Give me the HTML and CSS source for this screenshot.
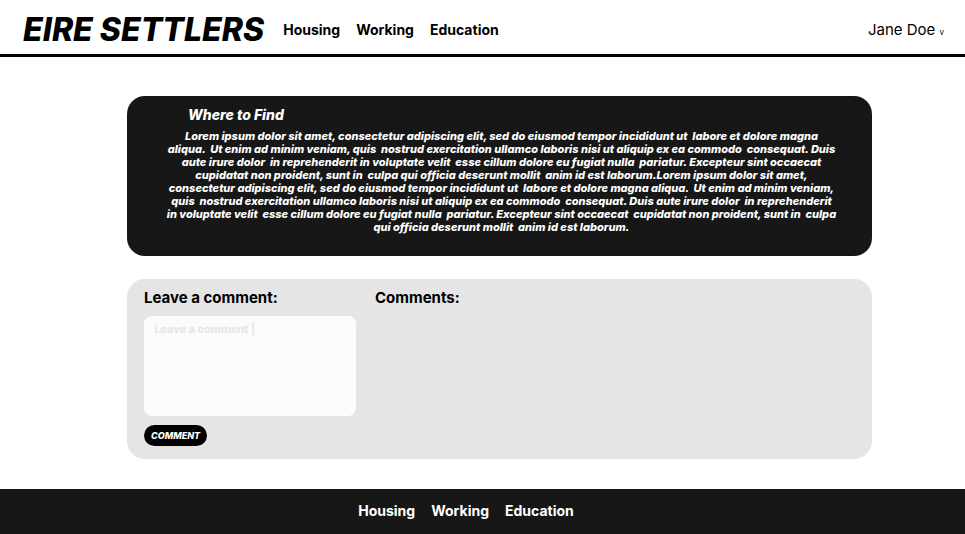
FILE: index.html
```html
<!DOCTYPE html>
<html lang="en">
<head>
<meta charset="utf-8">
<meta name="viewport" content="width=device-width, initial-scale=1">
<title>Eire Settlers</title>
<link rel="stylesheet" href="styles.css">
</head>
<body>
<header class="site-header">
  <h1 class="brand">EIRE SETTLERS</h1>
  <nav class="nav" aria-label="Main">
    <a href="#">Housing</a>
    <a href="#">Working</a>
    <a href="#">Education</a>
  </nav>
  <button class="account" type="button">Jane Doe <span class="caret">v</span></button>
</header>
<main class="content">
  <section class="article">
    <h2 class="article-title">Where to Find</h2>
    <p class="article-text">Lorem ipsum dolor sit amet, consectetur adipiscing elit, sed do eiusmod tempor incididunt ut  labore et dolore magna aliqua.  Ut enim ad minim veniam, quis  nostrud exercitation ullamco laboris nisi ut aliquip ex ea commodo  consequat. Duis aute irure dolor  in reprehenderit in voluptate velit  esse cillum dolore eu fugiat nulla  pariatur. Excepteur sint occaecat cupidatat non proident, sunt in  culpa qui officia deserunt mollit  anim id est laborum.Lorem ipsum dolor sit amet, consectetur adipiscing elit, sed do eiusmod tempor incididunt ut  labore et dolore magna aliqua.  Ut enim ad minim veniam, quis  nostrud exercitation ullamco laboris nisi ut aliquip ex ea commodo  consequat. Duis aute irure dolor  in reprehenderit in voluptate velit  esse cillum dolore eu fugiat nulla  pariatur. Excepteur sint occaecat  cupidatat non proident, sunt in  culpa qui officia deserunt mollit  anim id est laborum.</p>
  </section>
  <section class="discussion">
    <form class="comment-form">
      <label class="heading" for="comment">Leave a comment:</label>
      <textarea class="comment-box" id="comment" placeholder="Leave a comment |"></textarea>
      <button class="submit" type="button">COMMENT</button>
    </form>
    <div class="comments">
      <h2 class="heading">Comments:</h2>
    </div>
  </section>
</main>
<footer class="site-footer">
  <nav class="nav" aria-label="Footer">
    <a href="#">Housing</a>
    <a href="#">Working</a>
    <a href="#">Education</a>
  </nav>
</footer>
</body>
</html>
```
FILE: styles.css
```css
* {
  box-sizing: border-box;
}

body {
  display: flex;
  flex-direction: column;
  min-height: 100vh;
  margin: 0;
  background: #fff;
  color: #000;
  font-family: Inter, "Liberation Sans", sans-serif;
}

h1,
h2,
p {
  margin: 0;
}

button,
textarea {
  border: 0;
  font-family: inherit;
}

.site-header {
  display: flex;
  align-items: center;
  gap: 19px;
  padding: 10px 21px 4px 23px;
  border-bottom: 3px solid #000;
}

.brand {
  font-size: 32px;
  font-style: italic;
  font-weight: 800;
  line-height: 40px;
}

.nav {
  display: flex;
  gap: 16px;
  font-size: 14px;
  font-weight: 700;
  line-height: 20px;
}

.nav a {
  color: inherit;
  text-decoration: none;
}

.account {
  margin-left: auto;
  padding: 2px 0 0;
  background: none;
  color: #000;
  font-size: 15px;
  line-height: 20px;
}

.caret {
  font-size: 8px;
}

.content {
  display: flex;
  flex-direction: column;
  gap: 23px;
  padding: 39px 93px 30px 127px;
}

.article {
  padding: 9px 35px 22px 39px;
  border-radius: 18px;
  background: #171717;
  color: #fff;
  font-style: italic;
}

.article-title {
  margin: 0 0 5px 22px;
  font-size: 14px;
  font-weight: 800;
  line-height: 20px;
}

.article-text {
  font-size: 11px;
  font-weight: 800;
  line-height: 13px;
  text-align: center;
  white-space: pre-wrap;
}

.discussion {
  display: grid;
  grid-template-columns: 212px 1fr;
  gap: 19px;
  padding: 9px 17px 13px;
  border-radius: 18px;
  background: #e5e5e5;
}

.comment-form {
  display: flex;
  flex-direction: column;
  align-items: flex-start;
}

.heading {
  font-size: 15px;
  font-weight: 700;
  line-height: 20px;
}

.comment-box {
  width: 100%;
  height: 100px;
  margin: 8px 0 9px;
  padding: 6px 10px;
  border-radius: 8px;
  background: #fbfbfb;
  font-size: 11px;
  font-weight: 700;
  line-height: 14px;
  resize: none;
}

.comment-box::placeholder {
  color: #e5e5e5;
  opacity: 1;
}

.submit {
  padding: 0 7px;
  border-radius: 11px;
  background: #000;
  color: #fff;
  font-size: 9px;
  font-style: italic;
  font-weight: 800;
  line-height: 21px;
}

.site-footer {
  display: flex;
  justify-content: center;
  margin-top: auto;
  padding: 12px 33px 13px 0;
  background: #171717;
  color: #fff;
}
```
